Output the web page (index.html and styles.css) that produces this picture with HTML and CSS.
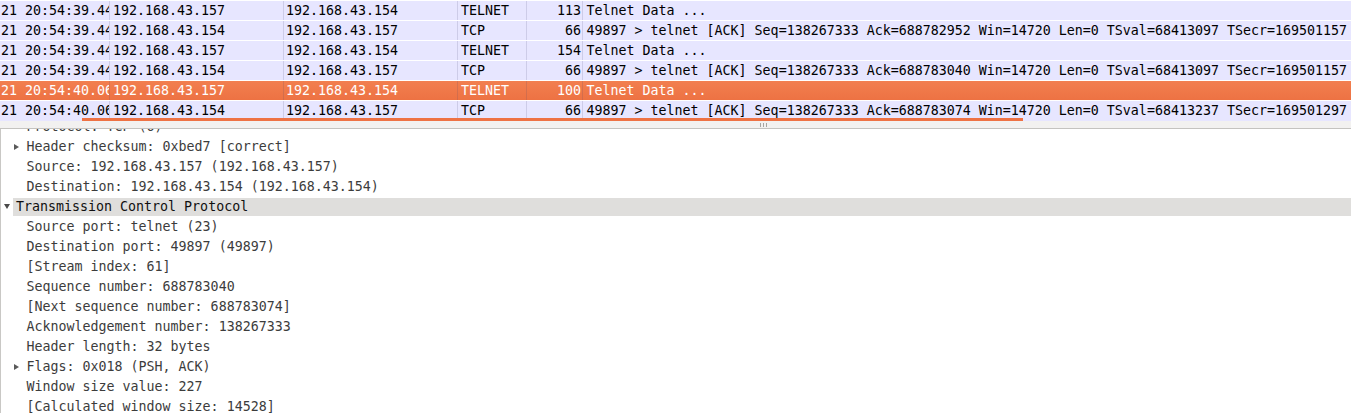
FILE: index.html
```html
<!DOCTYPE html>
<html>
<head>
<meta charset="utf-8">
<link rel="stylesheet" href="styles.css">
</head>
<body>
<div class="packets">
  <div class="prow">
    <div class="c c1">21 20:54:39.448</div><div class="c c2">192.168.43.157</div><div class="c c3">192.168.43.154</div><div class="c c4">TELNET</div><div class="c c5">113</div><div class="c c6">Telnet Data ...</div>
  </div>
  <div class="prow">
    <div class="c c1">21 20:54:39.448</div><div class="c c2">192.168.43.154</div><div class="c c3">192.168.43.157</div><div class="c c4">TCP</div><div class="c c5">66</div><div class="c c6">49897 &gt; telnet [ACK] Seq=138267333 Ack=688782952 Win=14720 Len=0 TSval=68413097 TSecr=169501157</div>
  </div>
  <div class="prow">
    <div class="c c1">21 20:54:39.448</div><div class="c c2">192.168.43.157</div><div class="c c3">192.168.43.154</div><div class="c c4">TELNET</div><div class="c c5">154</div><div class="c c6">Telnet Data ...</div>
  </div>
  <div class="prow">
    <div class="c c1">21 20:54:39.448</div><div class="c c2">192.168.43.154</div><div class="c c3">192.168.43.157</div><div class="c c4">TCP</div><div class="c c5">66</div><div class="c c6">49897 &gt; telnet [ACK] Seq=138267333 Ack=688783040 Win=14720 Len=0 TSval=68413097 TSecr=169501157</div>
  </div>
  <div class="prow selected">
    <div class="c c1">21 20:54:40.060</div><div class="c c2">192.168.43.157</div><div class="c c3">192.168.43.154</div><div class="c c4">TELNET</div><div class="c c5">100</div><div class="c c6">Telnet Data ...</div>
  </div>
  <div class="prow">
    <div class="c c1">21 20:54:40.060</div><div class="c c2">192.168.43.154</div><div class="c c3">192.168.43.157</div><div class="c c4">TCP</div><div class="c c5">66</div><div class="c c6">49897 &gt; telnet [ACK] Seq=138267333 Ack=688783074 Win=14720 Len=0 TSval=68413237 TSecr=169501297</div>
  </div>
  <div class="hscroll"></div>
</div>
<div class="splitter"><span class="grip"></span></div>
<div class="detail">
  <div class="tree">
    <div class="node child"><span class="twisty"></span><span class="label">Protocol: TCP (6)</span></div>
    <div class="node child"><span class="twisty closed"></span><span class="label">Header checksum: 0xbed7 [correct]</span></div>
    <div class="node child"><span class="twisty"></span><span class="label">Source: 192.168.43.157 (192.168.43.157)</span></div>
    <div class="node child"><span class="twisty"></span><span class="label">Destination: 192.168.43.154 (192.168.43.154)</span></div>
    <div class="node top sel"><span class="twisty open"></span><span class="label">Transmission Control Protocol</span></div>
    <div class="node child"><span class="twisty"></span><span class="label">Source port: telnet (23)</span></div>
    <div class="node child"><span class="twisty"></span><span class="label">Destination port: 49897 (49897)</span></div>
    <div class="node child"><span class="twisty"></span><span class="label">[Stream index: 61]</span></div>
    <div class="node child"><span class="twisty"></span><span class="label">Sequence number: 688783040</span></div>
    <div class="node child"><span class="twisty"></span><span class="label">[Next sequence number: 688783074]</span></div>
    <div class="node child"><span class="twisty"></span><span class="label">Acknowledgement number: 138267333</span></div>
    <div class="node child"><span class="twisty"></span><span class="label">Header length: 32 bytes</span></div>
    <div class="node child"><span class="twisty closed"></span><span class="label">Flags: 0x018 (PSH, ACK)</span></div>
    <div class="node child"><span class="twisty"></span><span class="label">Window size value: 227</span></div>
    <div class="node child"><span class="twisty"></span><span class="label">[Calculated window size: 14528]</span></div>
  </div>
</div>
</body>
</html>
```
FILE: styles.css
```css
html, body {
  margin: 0;
  padding: 0;
  background: #ffffff;
}
body {
  font-family: "DejaVu Sans Mono", "Liberation Mono", monospace;
  font-size: 13.3px;
  width: 1351px;
  height: 413px;
  overflow: hidden;
}
.packets {
  position: relative;
  height: 121px;
  overflow: hidden;
  background: #e7e6ff;
}
.prow {
  display: grid;
  grid-template-columns: 110px 174px 174px 69px 56px 1fr;
  height: 20px;
  box-sizing: border-box;
  border-top: 1px solid #ffffff;
  background: #e7e6ff;
  color: #000000;
}
.prow.selected {
  background: linear-gradient(#f27f4f, #ed7243);
  color: #ffffff;
}
.c {
  box-sizing: border-box;
  line-height: 19px;
  white-space: pre;
  overflow: hidden;
  padding-left: 3px;
  border-right: 1px solid rgba(70, 70, 110, 0.16);
}
.c1 { padding-left: 1px; }
.c3 { padding-left: 2px; }
.c5 { text-align: right; padding-left: 0; padding-right: 1px; }
.c6 { border-right: none; padding-left: 3.5px; }
.hscroll {
  position: absolute;
  left: 82px;
  bottom: 0;
  width: 941px;
  height: 3px;
  background: #ee7244;
}
.splitter {
  height: 7px;
  background: #f2f1f0;
  border-bottom: 1px solid #c4c3c0;
  display: flex;
  justify-content: center;
  align-items: center;
  padding-left: 175px;
}
.grip {
  width: 7px;
  height: 4px;
  background: linear-gradient(90deg, #a5a4a1 0 1px, transparent 1px 3px, #a5a4a1 3px 4px, transparent 4px 6px, #a5a4a1 6px 7px);
}
.detail {
  height: 284px;
  overflow: hidden;
  border-left: 1px solid #c9c8c5;
  background: #ffffff;
}
.tree {
  margin-top: -13px;
}
.node {
  display: flex;
  align-items: stretch;
  height: 20px;
  box-sizing: border-box;
  padding-top: 2px;
  color: #3c3c3c;
  white-space: pre;
}
.node.child {
  padding-left: 13px;
}
.node.child .twisty {
  width: 10px;
}
.node.top {
  padding-left: 3px;
}
.node.top .twisty {
  width: 9px;
}
.twisty {
  flex: none;
  position: relative;
}
.twisty.closed::before {
  content: "";
  position: absolute;
  left: 0;
  top: 6px;
  width: 0;
  height: 0;
  border-left: 5px solid #5a5a5a;
  border-top: 3.5px solid transparent;
  border-bottom: 3.5px solid transparent;
}
.twisty.open::before {
  content: "";
  position: absolute;
  left: 0;
  top: 6px;
  width: 0;
  height: 0;
  border-top: 5px solid #4a4a4a;
  border-left: 3.5px solid transparent;
  border-right: 3.5px solid transparent;
}
.label {
  flex: 1;
  line-height: 18px;
  padding-left: 3px;
}
.node.child .label {
  padding-left: 2.5px;
}
.node.sel .label {
  background: #dfdedc;
  color: #101010;
}
```
